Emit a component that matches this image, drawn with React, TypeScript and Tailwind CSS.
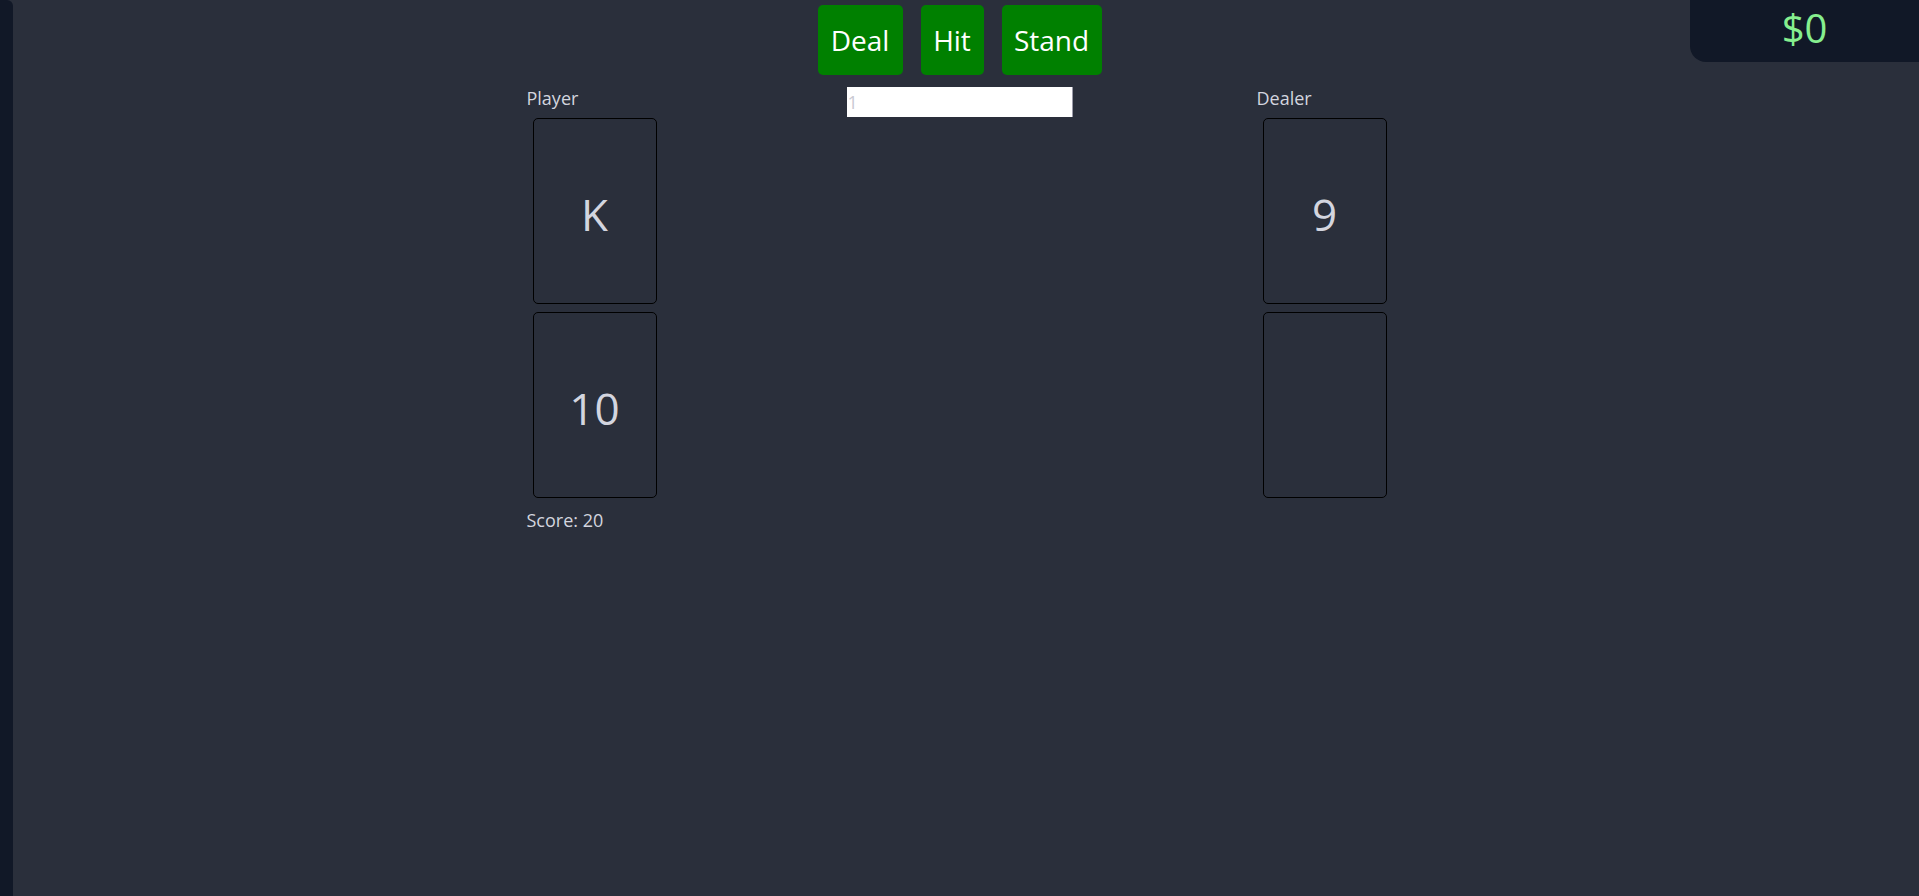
import React from "react";

const font = { fontFamily: '"Open Sans", "Noto Sans", sans-serif' };

function Card({ label }: { label?: string }) {
  return (
    <div className="w-[124px] h-[186px] rounded-[5px] border border-black flex items-center justify-center text-[44px] text-[#d3d5df] leading-none pt-[6px]">
      {label}
    </div>
  );
}

export default function App() {
  return (
    <div className="h-screen w-full bg-[#2a2f3b] flex overflow-hidden" style={font}>
      <div className="w-[13px] shrink-0 h-full bg-[#111827] rounded-tr-md" />
      <main className="relative flex-1 h-full pr-[13px]">
        <div className="absolute right-0 top-0 w-[229px] h-[62px] bg-[#111827] rounded-bl-[16px] flex items-center justify-center pb-[7px]">
          <span className="text-[40px] leading-none text-[#86ef8f]">$0</span>
        </div>

        <div className="flex justify-center gap-[18px] pt-[5px]">
          <button className="w-[85px] h-[70px] rounded-[5px] bg-[#008000] text-white text-[28px] flex items-center justify-center">
            Deal
          </button>
          <button className="w-[63px] h-[70px] rounded-[5px] bg-[#008000] text-white text-[28px] flex items-center justify-center">
            Hit
          </button>
          <button className="w-[100px] h-[70px] rounded-[5px] bg-[#008000] text-white text-[28px] flex items-center justify-center">
            Stand
          </button>
        </div>

        <div className="flex justify-center items-start gap-[184px] mt-[12px]">
          <div className="w-[136px] flex flex-col">
            <div className="text-[18px] leading-[23px] text-[#d3d5df]">Player</div>
            <div className="flex flex-col gap-[8px] pl-[6px] mt-[8px]">
              <Card label="K" />
              <Card label="10" />
            </div>
            <div className="text-[18px] leading-[25px] text-[#d3d5df] mt-[10px]">Score: 20</div>
          </div>

          <input
            className="w-[226px] h-[30px] bg-white border-r border-[#9a9aa8] text-[18px] px-[1px] outline-none placeholder:text-[#c9c9d2]"
            placeholder="1"
          />

          <div className="w-[136px] flex flex-col">
            <div className="text-[18px] leading-[23px] text-[#d3d5df]">Dealer</div>
            <div className="flex flex-col gap-[8px] pl-[6px] mt-[8px]">
              <Card label="9" />
              <Card />
            </div>
          </div>
        </div>
      </main>
    </div>
  );
}
